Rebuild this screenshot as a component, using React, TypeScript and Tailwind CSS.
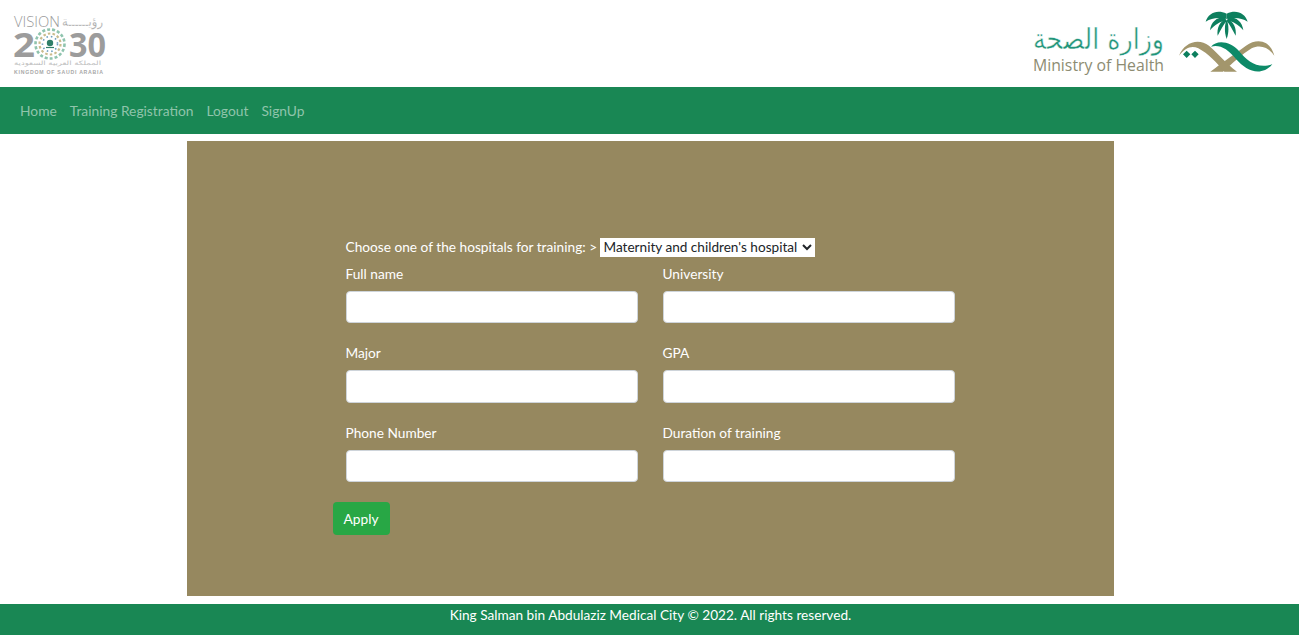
const fields = ["Full name", "University", "Major", "GPA", "Phone Number", "Duration of training"];

const VisionLogo = () => (
  <svg width="96" height="68" viewBox="0 0 96 68" aria-label="Vision 2030">
    <text x="1" y="17" fontFamily="Open Sans" fontWeight="300" fontSize="14" textLength="46" lengthAdjust="spacingAndGlyphs" fill="#9a9a9a">VISION</text>
    <text x="90" y="16" direction="rtl" fontFamily="DejaVu Sans" fontSize="13" textLength="41" lengthAdjust="spacingAndGlyphs" fill="#9a9a9a" stroke="#fff" strokeWidth="0.3">رؤيــــــة</text>
    <text x="0" y="47" fontFamily="Open Sans" fontWeight="700" fontSize="34" textLength="22" lengthAdjust="spacingAndGlyphs" fill="#9c9c9c">2</text>
    <text x="56" y="47" fontFamily="Open Sans" fontWeight="700" fontSize="34" textLength="37" lengthAdjust="spacingAndGlyphs" fill="#9c9c9c">30</text>
    <g fill="none">
      <circle cx="37" cy="34" r="14.5" stroke="#8fc4ae" strokeWidth="2.6" strokeDasharray="3 2" />
      <circle cx="37" cy="34" r="10.5" stroke="#c9bb8c" strokeWidth="2.2" strokeDasharray="2.5 2.2" />
      <circle cx="37" cy="34" r="7.5" stroke="#6d9fc0" strokeWidth="1.6" strokeDasharray="1.5 3" />
    </g>
    <circle cx="37" cy="33" r="3.2" fill="#2f7f68" />
    <path d="M33 37.5 L41 37.5" stroke="#2f7f68" strokeWidth="1.2" />
    <text x="88" y="55" direction="rtl" fontFamily="DejaVu Sans" fontSize="6" textLength="87" lengthAdjust="spacingAndGlyphs" fill="#bdbdbd">المملكة العربية السعودية</text>
    <text x="1" y="63.5" fontFamily="Liberation Sans" fontWeight="700" fontSize="5.2" textLength="89" lengthAdjust="spacing" fill="#a8a8a8">KINGDOM OF SAUDI ARABIA</text>
  </svg>
);

const MohLogo = () => (
  <svg width="245" height="68" viewBox="0 0 245 68" aria-label="Ministry of Health">
    <text x="133" y="39" direction="rtl" fontFamily="DejaVu Sans" fontSize="29" textLength="131" lengthAdjust="spacingAndGlyphs" fill="#23957a" stroke="#fff" strokeWidth="0.5">وزارة الصحة</text>
    <text x="133" y="61" textAnchor="end" fontFamily="Open Sans" fontSize="15.5" textLength="131" lengthAdjust="spacingAndGlyphs" fill="#8d8c72">Ministry of Health</text>
    {/* emblem, drawn in 3x coords of the crop */}
    <g transform="translate(144 -5) scale(0.3333)">
      <g fill="#0d7f5e">
        <path d="M155 26 C126 12 100 24 92 50 C110 38 132 36 155 42 Z" />
        <path d="M150 36 C124 36 108 52 105 76 C120 58 135 51 152 46 Z" />
        <path d="M152 42 C134 50 125 70 128 92 C138 74 146 58 155 48 Z" />
        <path d="M155 44 C148 60 148 82 155 102 C162 82 162 60 155 44 Z" />
        <path d="M155 26 C184 12 210 24 218 50 C200 38 178 36 155 42 Z" />
        <path d="M160 36 C186 36 202 52 205 76 C190 58 175 51 158 46 Z" />
        <path d="M158 42 C176 50 185 70 182 92 C172 74 164 58 155 48 Z" />
      </g>
      <path d="M298 152 C285 106 248 98 213 122 C180 146 148 168 106 200 L144 200 C172 176 200 148 230 130 C255 118 280 126 298 152 Z" fill="#a3966c" />
      <path d="M12 152 C28 112 70 98 102 122 C132 148 152 174 186 200 L148 200 C124 172 100 146 70 130 C50 120 30 128 12 152 Z" fill="#a3966c" />
      <path d="M108 125 C125 103 167 108 192 138 C217 168 247 193 292 178 C257 217 213 197 183 162 C158 132 135 118 108 125 Z" fill="#0d8a68" />
      <path d="M35 137 L46 148 L35 159 L24 148 Z M60 137 L71 148 L60 159 L49 148 Z" fill="#0d7f5e" />
    </g>
  </svg>
);

export default function App() {
  return (
    <div className="min-h-[635px] bg-white font-['Lato',sans-serif] text-[13.7px] text-white">
      <header className="flex h-[87px] items-start justify-between pl-[13px] pr-[23px] pt-[10px]">
        <VisionLogo />
        <MohLogo />
      </header>

      <nav className="flex h-[47px] items-center gap-[13px] bg-[#198754] pl-5 pt-px text-[13.8px] text-[#8fc4ab]">
        <a>Home</a>
        <a>Training Registration</a>
        <a>Logout</a>
        <a>SignUp</a>
      </nav>

      <main className="ml-[187px] mt-[7px] h-[455px] w-[927px] bg-[#96885f] pt-[96px]">
        <form className="mx-auto w-[636px]">
          <div className="flex h-[20px] items-center pl-[13px]">
            <span className="w-[254px] shrink-0">Choose one of the hospitals for training: &gt;</span>
            <select className="h-[19px] w-[215px] bg-white text-[13.6px] text-[#212529]">
              <option>Maternity and children's hospital</option>
            </select>
          </div>
          <div className="mt-[6.6px] grid grid-cols-[292px_292px] gap-x-[25px] gap-y-5 pl-[13px]">
            {fields.map((f) => (
              <div key={f}>
                <label className="block h-[21px] leading-[20px]">{f}</label>
                <input className="mt-[6px] block h-[32.5px] w-full rounded-[4px] border border-[#ced4da] bg-white" />
              </div>
            ))}
          </div>
          <button type="button" className="mt-5 h-[33px] w-[57px] rounded-[4px] bg-[#28a745] pt-px text-white">
            Apply
          </button>
        </form>
      </main>

      <footer className="mt-2 flex h-[31px] justify-center bg-[#198754] pl-[2px] pt-[1px] text-[13.65px]">
        King Salman bin Abdulaziz Medical City © 2022. All rights reserved.
      </footer>
    </div>
  );
}
